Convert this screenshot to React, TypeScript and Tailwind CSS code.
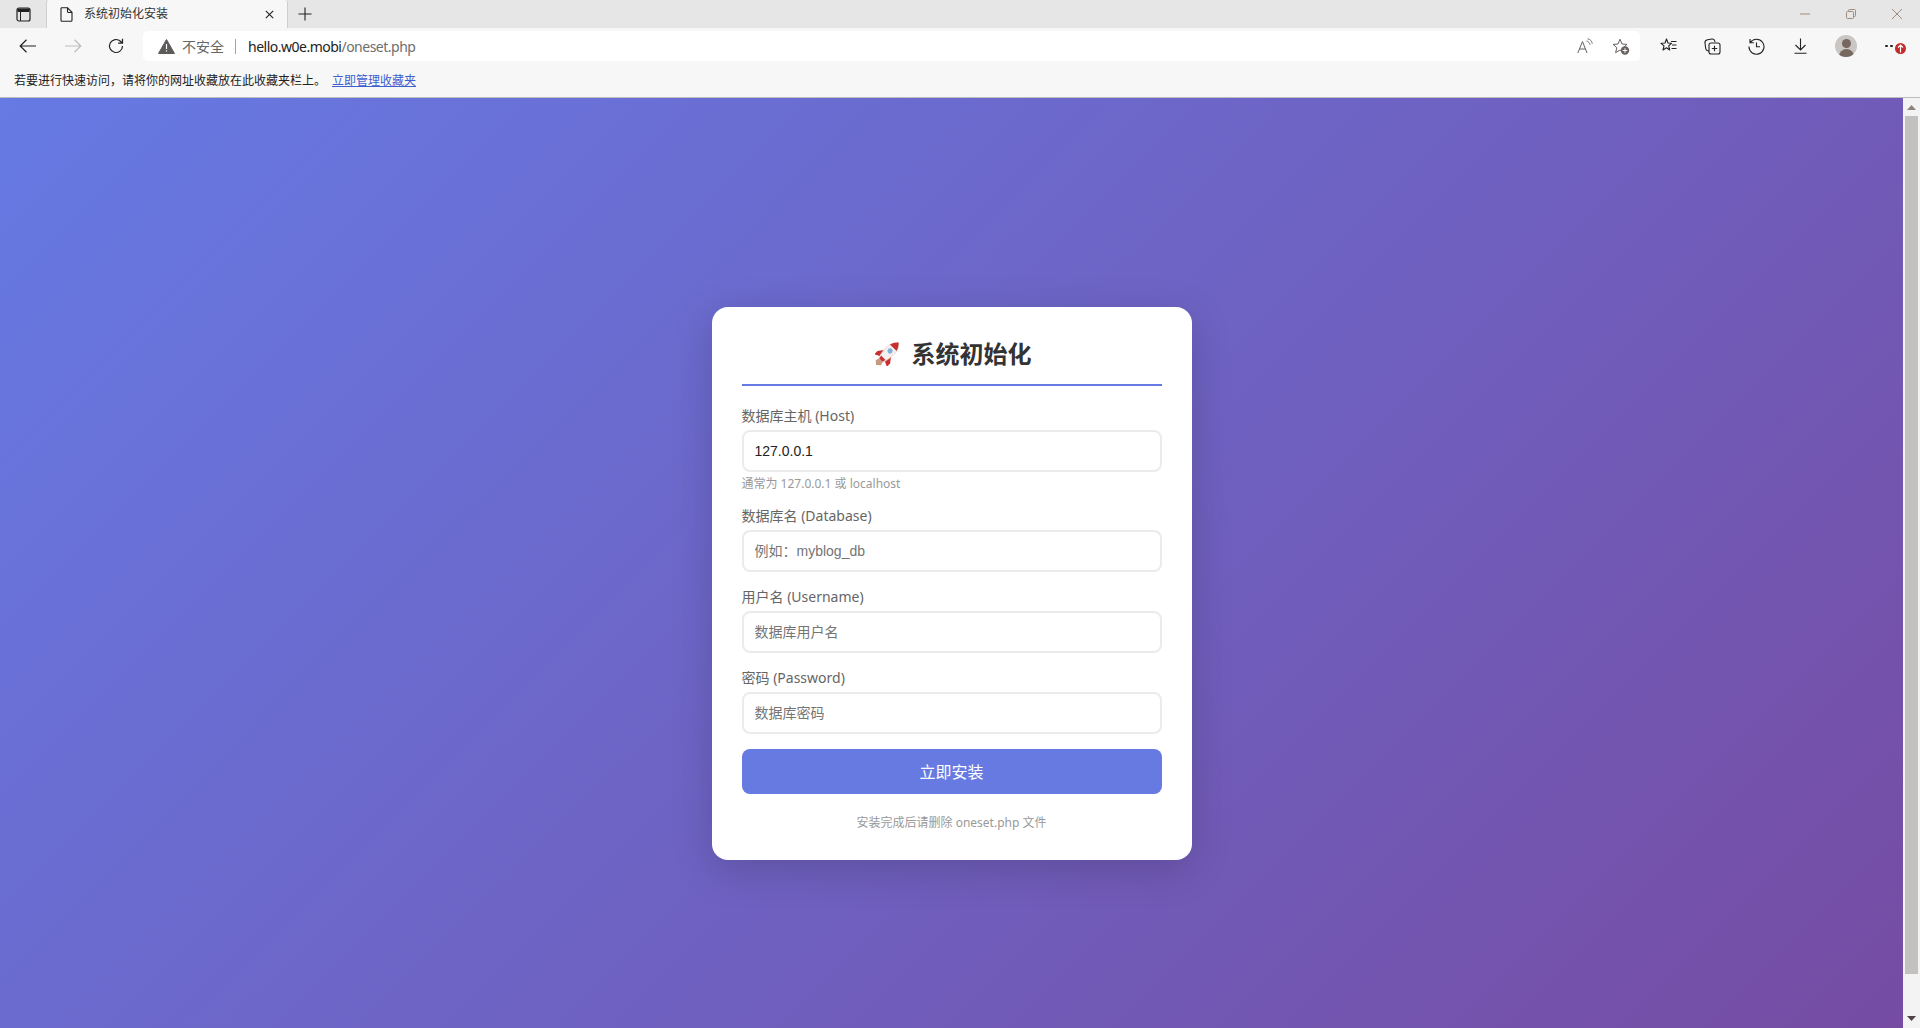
import React from "react";

const stroke = { fill: "none", stroke: "currentColor", strokeWidth: 1.2 };

function Icon({ size = 20, className, children }: { size?: number; className?: string; children: React.ReactNode }) {
  return (
    <svg width={size} height={size} viewBox="0 0 20 20" className={className} {...stroke}>
      {children}
    </svg>
  );
}

function Rocket() {
  return (
    <svg width="25" height="25" viewBox="0 0 24 24" className="shrink-0">
      <g transform="rotate(45 12 12)">
        {/* nozzle + flame */}
        <path d="M9.500 21h5l1 3.500-3.500 3-3.500-3z" fill="#c49a80" />
        {/* fins */}
        <path d="M8 11 3.500 17v4.500L8.500 19z" fill="#c8302f" />
        <path d="M16 11l4.500 6v4.500L15.500 19z" fill="#c8302f" />
        {/* body */}
        <path d="M12-3c3.500 3 5.200 7.500 5 12.500-.1 4-1 8-2 11.500H9c-1-3.500-1.900-7.500-2-11.500C6.800 4.500 8.500 0 12-3z" fill="#f5efee" stroke="#e2c9c6" strokeWidth=".6" />
        <path d="M12-3c2.200 1.900 3.700 4.400 4.500 7.200h-9C8.300 1.400 9.800-1.100 12-3z" fill="#c8302f" />
        <path d="M9.800 21h4.400l.8-3.300H9z" fill="#c8302f" />
        <circle cx="12" cy="8.500" r="2.500" fill="#7fb2dc" />
      </g>
    </svg>
  );
}

function Field({ label, placeholder, value, help }: { label: string; placeholder?: string; value?: string; help?: string }) {
  return (
    <div className="mb-[15px]">
      <label className="mb-[5px] block text-[14px] leading-[19px] text-[#666]">{label}</label>
      <input
        defaultValue={value}
        placeholder={placeholder}
        className="block h-[42px] w-full rounded-lg border-2 border-[#ebebeb] bg-white px-[11px] font-['Liberation_Sans','Noto_Sans_CJK_SC',sans-serif] text-[14px] text-[#222] outline-none placeholder:text-[#757575]"
      />
      {help && <p className="mt-[4px] text-[12px] leading-[15px] text-[#999]">{help}</p>}
    </div>
  );
}

function TabStrip() {
  return (
    <div className="flex h-[28px] items-stretch bg-[#e6e6e6]">
      <div className="flex w-[46px] items-center justify-center">
        <svg width="15" height="15" viewBox="0 0 15 15" className="text-[#222]">
          <rect x="1" y="1" width="13" height="13" rx="2" fill="none" stroke="currentColor" strokeWidth="1.200" />
          <path d="M1.500 1.500h12V5h-12z" fill="currentColor" />
          <path d="M4.500 5v9" stroke="currentColor" strokeWidth="1" />
        </svg>
      </div>
      <div className="flex w-[242px] items-center rounded-t-[3px] border-x border-[#cfcfcf] bg-[#f7f7f7] pl-[13px] pr-[13px]">
        <svg width="13" height="15" viewBox="0 0 13 15" fill="none" stroke="#222" strokeWidth="1.100">
          <path d="M1.500.8h6L12 5.300v8a1 1 0 0 1-1 1H2a1 1 0 0 1-1-1V1.500z" />
          <path d="M7.500.8v3.700a1 1 0 0 0 1 1H12" />
        </svg>
        <span className="ml-[11px] flex-1 text-[12px] text-[#333]">系统初始化安装</span>
        <svg width="9" height="9" viewBox="0 0 9 9" stroke="#222" strokeWidth="1.100">
          <path d="M.8.8l7.400 7.400M8.200.8.800 8.200" />
        </svg>
      </div>
      <div className="flex items-center pl-[10px]">
        <svg width="14" height="14" viewBox="0 0 14 14" stroke="#222" strokeWidth="1.100">
          <path d="M7 .5v13M.5 7h13" />
        </svg>
      </div>
      <div className="ml-auto flex items-center gap-[36px] pr-[18px] text-[#a08c7c]">
        <svg width="10" height="10" viewBox="0 0 10 10" stroke="currentColor">
          <path d="M0 5h10" />
        </svg>
        <svg width="10" height="10" viewBox="0 0 10 10" fill="none" stroke="currentColor">
          <rect x=".5" y="2.500" width="7" height="7" rx="1" />
          <path d="M2.500 2.500V1.500a1 1 0 0 1 1-1h5a1 1 0 0 1 1 1v5a1 1 0 0 1-1 1h-1" />
        </svg>
        <svg width="10" height="10" viewBox="0 0 10 10" stroke="currentColor">
          <path d="M0 0l10 10M10 0 0 10" />
        </svg>
      </div>
    </div>
  );
}

function Toolbar() {
  return (
    <div className="flex h-[36px] items-center bg-[#f7f7f7]">
      <div className="flex items-center pl-[19px] text-[#222]">
        <svg width="18" height="14" viewBox="0 0 18 14" fill="none" stroke="currentColor" strokeWidth="1.200">
          <path d="M1 7h16M7.500.8 1.200 7l6.300 6.200" />
        </svg>
        <svg width="18" height="14" viewBox="0 0 18 14" fill="none" stroke="#bdbdbd" strokeWidth="1.200" className="ml-[27px]">
          <path d="M1 7h16M10.500.8 16.800 7l-6.300 6.200" />
        </svg>
        <Icon size={20} className="ml-[24px]">
          <path d="M16.500 10a6.500 6.500 0 1 1-2-4.700L16.500 7.200M16.500 2.800v4.400h-4.400" />
        </Icon>
      </div>
      <div className="ml-[17px] flex h-[30px] w-[1497px] items-center rounded-[5px] bg-white pl-[15px] pr-[10px]">
        <svg width="17" height="15" viewBox="0 0 17 15">
          <path d="M8.500.5 16.500 14.500H.5z" fill="#5f5a5a" stroke="#5f5a5a" strokeLinejoin="round" />
          <path d="M8.500 5v5M8.500 11.200v1.300" stroke="#fff" strokeWidth="1.200" />
        </svg>
        <span className="ml-[7px] text-[14px] text-[#666]">不安全</span>
        <span className="ml-[11px] h-[15px] w-px bg-[#b89f8c]" />
        <span className="ml-[12px] text-[14px] tracking-[-0.5px] text-[#222]">
          hello.w0e.mobi<span className="text-[#6e6e6e]">/oneset.php</span>
        </span>
        <div className="ml-auto flex items-center gap-[19px] text-[#6a6060]">
          <svg width="16" height="16" viewBox="0 0 16 16" fill="none" stroke="currentColor">
            <path d="M.8 15 5.500 3.500 10 15M2.300 11h6.400" />
            <path d="M9.500 3c1.800.3 3.200 1.800 3.500 3.800M10.500 .8c2.400.3 4.400 2.200 4.800 4.800" strokeWidth=".9" />
          </svg>
          <svg width="18" height="17" viewBox="0 0 18 17">
            <path d="M8 1.200 10 6l5 .4-3.800 3.300 1.200 5L8 12l-4.400 2.700 1.200-5L1 6.400 6 6z" fill="none" stroke="currentColor" strokeLinejoin="round" />
            <circle cx="13" cy="12.500" r="4.200" fill="#6a6060" />
            <path d="M13 10.200v4.600M10.700 12.500h4.600" stroke="#fff" />
          </svg>
        </div>
      </div>
      <div className="flex flex-1 items-center pl-[20px] text-[#222]">
        <svg width="17" height="16" viewBox="0 0 17 16" fill="none" stroke="currentColor" strokeWidth="1.100">
          <path d="M6.500 1 8 5l3.500.3-2.800 2.500 1 4.200-3.200-2.300L3 12l1-4.200L1 5.300 5 5z" strokeLinejoin="round" />
          <path d="M11 3.500h5.500M12 7h4.500M11.500 10.500h5" />
        </svg>
        <svg width="17" height="17" viewBox="0 0 17 17" fill="none" stroke="currentColor" strokeWidth="1.100" className="ml-[27px]">
          <rect x="5" y="5" width="11" height="11" rx="2" />
          <path d="M10.500 7.800v5.400M7.800 10.500h5.400" />
          <path d="M5 13c-2 0-3-1-3.300-2.500L1 5c-.2-1.500.8-3 2.500-3.300L8 1c1.500-.2 2.800.8 3 3" />
        </svg>
        <svg width="17" height="17" viewBox="0 0 17 17" fill="none" stroke="currentColor" strokeWidth="1.100" className="ml-[27px]">
          <path d="M2.300 4.500A7.500 7.500 0 1 1 1 8.500M2 1v3.800h3.800" />
          <path d="M8.500 4.500v4.300h3.500" />
        </svg>
        <svg width="13" height="16" viewBox="0 0 13 16" fill="none" stroke="currentColor" strokeWidth="1.100" className="ml-[29px]">
          <path d="M6.500 .5v11.500M1.500 7l5 5 5-5M.5 15.300h12" />
        </svg>
        <div className="relative ml-[28px] h-[22px] w-[22px] overflow-hidden rounded-full bg-[#c9c6c4]">
          <span className="absolute left-[6.500px] top-[4px] h-[9px] w-[9px] rounded-full bg-[#77685f]" />
          <span className="absolute left-[3.500px] top-[14px] h-[10px] w-[15px] rounded-t-full bg-[#77685f]" />
        </div>
        <div className="relative ml-[28px] flex h-[14px] w-[13px] items-center justify-between">
          <span className="h-[2.500px] w-[2.500px] rounded-full bg-[#222]" />
          <span className="h-[2.500px] w-[2.500px] rounded-full bg-[#222]" />
          <span className="h-[2.500px] w-[2.500px] rounded-full bg-[#222]" />
          <span className="absolute left-[10px] top-[4px] flex h-[11px] w-[11px] items-center justify-center rounded-full bg-[#c42b2b]">
            <svg width="7" height="9" viewBox="0 0 7 9" fill="none" stroke="#fff" strokeWidth="1.200">
              <path d="M3.500 8.500V1M1 3.500 3.500 1 6 3.500" />
            </svg>
          </span>
        </div>
      </div>
    </div>
  );
}

function FavoritesBar() {
  return (
    <div className="flex h-[34px] items-center border-b border-[#bdbdbd] bg-[#f7f7f7] pl-[14px] text-[12px] text-[#222]">
      <span>若要进行快速访问，请将你的网址收藏放在此收藏夹栏上。</span>
      <a className="ml-[6px] text-[#3f5fd0] underline">立即管理收藏夹</a>
    </div>
  );
}

function Scrollbar() {
  return (
    <div className="flex w-[17px] shrink-0 flex-col items-center bg-[#f3f3f3]">
      <div className="flex h-[18px] items-center justify-center">
        <svg width="9" height="5" viewBox="0 0 9 5"><path d="M4.500 0 9 5H0z" fill="#8f8278" /></svg>
      </div>
      <div className="h-[858px] w-[13px] bg-[#c2c1bf]" />
      <div className="flex-1" />
      <div className="flex h-[20px] items-center justify-center">
        <svg width="9" height="5" viewBox="0 0 9 5"><path d="M4.500 5 9 0H0z" fill="#4e4447" /></svg>
      </div>
    </div>
  );
}

export default function App() {
  return (
    <div className="flex h-[1028px] flex-col overflow-hidden font-['Noto_Sans','Noto_Sans_CJK_SC',sans-serif]">
      <TabStrip />
      <Toolbar />
      <FavoritesBar />

      <div className="flex min-h-0 flex-1">
        <div className="min-w-0 flex-1 overflow-hidden">
          {/* page is taller than the window, so the card sits a bit below centre */}
          <div className="flex h-[970px] items-center justify-center bg-[linear-gradient(135deg,#667aE4_0%,#764ba2_100%)]">
            <div className="w-[480px] rounded-2xl bg-white px-[30px] pb-[29px] pt-[30px] shadow-[0_10px_40px_rgba(0,0,0,0.17)]">
              <h1 className="mb-5 flex items-center justify-center gap-[12px] border-b-2 border-[#667ae4] pb-[14px] pl-[3px] pt-px text-[24px] font-bold leading-8 text-[#333]">
                <Rocket />
                系统初始化
              </h1>
              <Field label="数据库主机 (Host)" value="127.0.0.1" help="通常为 127.0.0.1 或 localhost" />
              <Field label="数据库名 (Database)" placeholder="例如：myblog_db" />
              <Field label="用户名 (Username)" placeholder="数据库用户名" />
              <Field label="密码 (Password)" placeholder="数据库密码" />
              <button className="block h-[45px] w-full rounded-lg bg-[#667ae2] pt-px text-[16px] text-white">立即安装</button>
              <p className="mt-[21px] text-center text-[12px] leading-4 text-[#999]">安装完成后请删除 oneset.php 文件</p>
            </div>
          </div>
        </div>
        <Scrollbar />
      </div>
    </div>
  );
}
